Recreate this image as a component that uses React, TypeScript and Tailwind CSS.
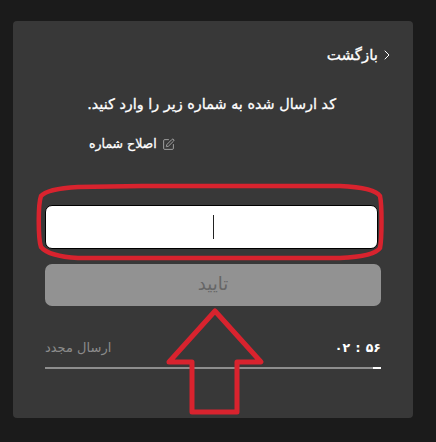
import { ChevronLeft, SquarePen } from "lucide-react";

function Annotations() {
  return (
    <svg
      className="absolute left-0 top-0 pointer-events-none"
      width={436}
      height={442}
      viewBox="0 0 436 442"
      fill="none"
    >
      <path
        d="M78 187 L142 186 L340 186 C362 187 376 190 380 196 C382 205 382 238 380 248 C376 254 362 257 340 258 L78 258 C60 257 46 253 41 247 C38 238 38 204 41 196 C46 190 60 188 78 187 Z"
        stroke="#d8232e"
        strokeWidth={4.5}
        strokeLinejoin="round"
      />
      <path
        d="M215 311 L261 362 L237 362 L237 412 L192 412 L192 362 L169 362 Z"
        stroke="#d8232e"
        strokeWidth={5}
        strokeLinejoin="round"
      />
    </svg>
  );
}

export default function App() {
  return (
    <div className="relative w-[436px] h-[442px] overflow-hidden bg-[#1b1b1b] pt-[21px] pl-[13px] font-['DejaVu_Sans',sans-serif]">
      <div
        dir="rtl"
        className="w-[400px] h-[397px] rounded-[4px] bg-[#383838] pt-[24px] pr-[22px] pl-[32px] flex flex-col"
      >
        <div className="flex items-center gap-[1px] h-[20px] text-white">
          <ChevronLeft className="rotate-180 w-[16px] h-[16px] -mr-[4px]" strokeWidth={1.5} />
          <span className="text-[15px] [-webkit-text-stroke:0.3px_white]">بازگشت</span>
        </div>

        <p className="mt-[27px] mr-[55px] h-[24px] leading-[24px] text-[14.4px] [-webkit-text-stroke:0.3px_white] text-white whitespace-nowrap">
          کد ارسال شده به شماره زیر را وارد کنید.
        </p>

        <div className="mt-[18px] pl-[44px] flex items-center justify-end h-[20px] text-white text-[12.5px] [-webkit-text-stroke:0.3px_white] whitespace-nowrap">
          <SquarePen className="w-[13px] h-[13px] text-[#cfcfcf] ml-[5px]" strokeWidth={1.25} />
          <span>اصلاح شماره</span>
        </div>

        <div className="mt-[51px] mr-[13px] pl-[3px] h-[44px] rounded-[7px] border border-black bg-white flex items-center justify-center">
          <div className="w-px h-[24px] bg-[#222222]" />
        </div>

        <button className="mt-[15px] mr-[10px] pb-[3px] h-[42px] rounded-[7px] bg-[#929292] text-[#666666] text-[18px] flex items-center justify-center">
          تایید
        </button>

        <div className="mt-[32px] mr-[10px] flex items-center justify-between h-[20px]">
          <span dir="ltr" className="text-white text-[12.5px] font-bold [word-spacing:1px]">
            ۰۲ : ۵۶
          </span>
          <span className="text-[#8c8c8c] text-[13px]">ارسال مجدد</span>
        </div>

        <div className="mt-[9px] mr-[10px] flex h-[2px] bg-[#8e8e8e]">
          <div className="w-[8px] bg-white" />
        </div>
      </div>
      <Annotations />
    </div>
  );
}
